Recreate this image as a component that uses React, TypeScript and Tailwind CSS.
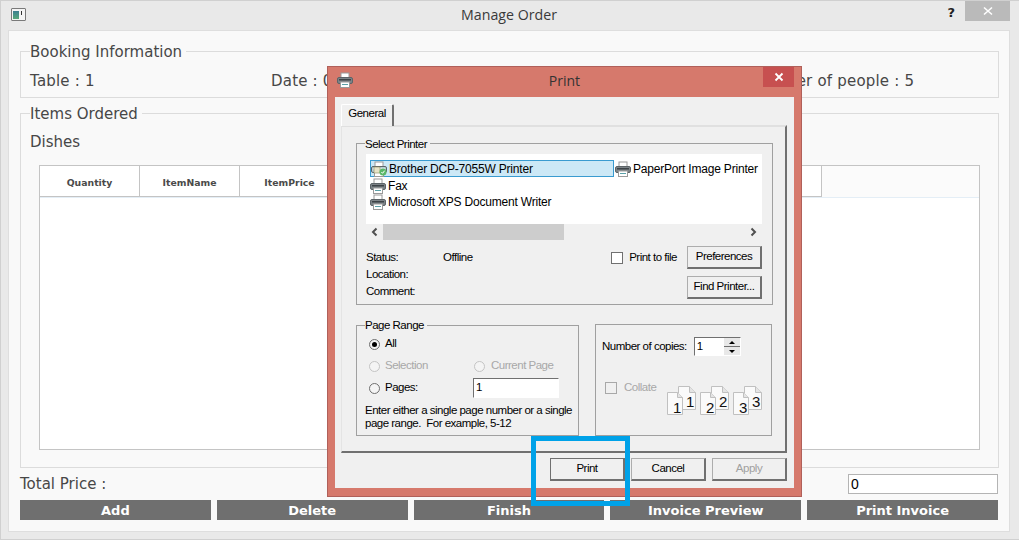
import React from "react";

const bottomButtons = ["Add", "Delete", "Finish", "Invoice Preview", "Print Invoice"];
const visibleColumns = ["Quantity", "ItemName", "ItemPrice", "", "", "", ""];

const PrinterIcon = ({ badge = false }: { badge?: boolean }) => (
  <svg width="16" height="16" viewBox="0 0 16 16" className="shrink-0">
    <rect x="4" y="1" width="8" height="5" fill="#fff" stroke="#9a9a9a" />
    <rect x="0.5" y="5.5" width="15" height="6" rx="1.5" fill={badge ? "#b9cfd6" : "#7d8488"} stroke="#5d6468" />
    <rect x="2" y="7" width="12" height="1.5" fill={badge ? "#dfeaee" : "#3d4347"} />
    <rect x="3.5" y="10" width="9" height="5.5" fill="#fff" stroke="#9a9a9a" />
    {badge ? (
      <>
        <rect x="3" y="6" width="6" height="6" fill="#e8e4c8" stroke="#8a8a60" strokeWidth="0.6" />
        <circle cx="12" cy="11" r="3.5" fill="#58b868" />
        <path d="M10.4 11l1.2 1.3 2-2.6" fill="none" stroke="#fff" strokeWidth="1" />
      </>
    ) : (
      <rect x="5" y="12" width="6" height="1" fill="#5aa0a8" />
    )}
  </svg>
);

const WinButton = ({ label, className = "" }: { label: string; className?: string }) => (
  <div
    className={`flex items-center justify-center h-[23px] bg-[#f0f0f0] border border-[#adadad] border-r-2 border-b-2 border-r-[#707070] border-b-[#707070] ${className}`}
  >
    {label}
  </div>
);

const Radio = ({ checked = false, disabled = false }: { checked?: boolean; disabled?: boolean }) => (
  <span
    className={`flex items-center justify-center w-[11px] h-[11px] rounded-full bg-[#f4f4f4] border shrink-0 ${
      disabled ? "border-[#c4c4c4]" : "border-[#6f6f6f]"
    }`}
  >
    {checked && <span className="w-[5px] h-[5px] rounded-full bg-black" />}
  </span>
);

const Check = ({ disabled = false }: { disabled?: boolean }) => (
  <span
    className={`block w-[12px] h-[12px] shrink-0 border ${
      disabled ? "bg-[#f0f0f0] border-[#a8a8a8]" : "bg-white border-[#707070]"
    }`}
  />
);

const PageIcon = ({ n }: { n: number }) => (
  <svg width="32" height="30" viewBox="0 0 32 30" className="shrink-0">
    <path d="M12.5 0.5h11l6 6v17h-17z" fill="#fafafa" stroke="#c0c0c0" />
    <path d="M23.5 0.5v6h6" fill="#e4e4e4" stroke="#c0c0c0" />
    <text x="24" y="21" fontSize="15" textAnchor="middle" fill="#111" fontFamily="Liberation Sans, sans-serif">{n}</text>
    <path d="M1.5 6.5h10l5 5v17h-15z" fill="#fafafa" stroke="#c0c0c0" />
    <path d="M11.5 6.5v5h5" fill="#e4e4e4" stroke="#c0c0c0" />
    <text x="11" y="27" fontSize="15" textAnchor="middle" fill="#111" fontFamily="Liberation Sans, sans-serif">{n}</text>
  </svg>
);

const PrintDialog = () => (
  <div className="absolute left-[326px] top-[65px] w-[475px] h-[431px] flex flex-col bg-[#d6796c] border border-[#b0605a] font-['Liberation_Sans',sans-serif] text-[11.5px] leading-none text-black tracking-[-0.5px]">
    {/* Title bar */}
    <div className="relative flex items-center justify-center h-[30px] shrink-0">
      <div className="absolute left-[9px] top-[5px]">
        <PrinterIcon />
      </div>
      <span className="font-['Open_Sans',sans-serif] text-[14px] text-[#333333] tracking-normal mb-[2px]">Print</span>
      <div className="absolute right-[7px] top-0 flex items-center justify-center w-[31px] h-[20px] bg-[#c75050]">
        <svg width="10" height="10" viewBox="0 0 10 10">
          <path d="M1.5 1.5l7 7M8.5 1.5l-7 7" stroke="#fff" strokeWidth="1.8" />
        </svg>
      </div>
    </div>

    <div className="flex-1 mx-[7px] mb-[8px] bg-[#f0f0f0] px-[6px] pt-[7px] flex flex-col">
      {/* Tab */}
      <div className="flex h-[21px] shrink-0">
        <div className="w-[53px] h-[22px] pb-[3px] z-10 flex items-center justify-center bg-[#f0f0f0] border-l border-t border-white border-r-2 border-r-[#707070] rounded-t-[2px]">
          General
        </div>
      </div>

      {/* Tab panel */}
      <div className="w-[446px] h-[328px] shrink-0 border border-t-2 border-[#e4e4e4] border-t-[#e0e0e0] border-r-2 border-r-[#707070] border-b-2 border-b-[#707070] px-[14px] pt-[9px] flex flex-col">
        <fieldset className="w-[417px] h-[169px] shrink-0 border border-[#a0a0a0] px-[9px] m-0 min-w-0">
          <legend className="ml-[-1px] pr-[3px] pt-[1px] leading-[14px]">Select Printer</legend>
          <div className="h-[70px] w-[396px] bg-white pt-[6px] pl-[4px] mt-[3px] text-[12px] tracking-[-0.2px]">
            <div className="flex">
              <div className="w-[244px] h-[17px] flex items-center gap-[2px] bg-[#cce8f6] border border-[#3a9bd0] pl-0">
                <PrinterIcon badge />
                <span>Brother DCP-7055W Printer</span>
              </div>
              <div className="h-[17px] flex items-center gap-[2px] ml-[1px]">
                <PrinterIcon />
                <span>PaperPort Image Printer</span>
              </div>
            </div>
            <div className="h-[17px] flex items-center gap-[2px]">
              <PrinterIcon />
              <span>Fax</span>
            </div>
            <div className="h-[16px] flex items-center gap-[2px]">
              <PrinterIcon />
              <span>Microsoft XPS Document Writer</span>
            </div>
          </div>

          {/* Scrollbar */}
          <div className="h-[16px] w-[396px] flex items-center bg-[#f0f0f0]">
            <svg width="17" height="16" viewBox="0 0 17 16" className="shrink-0">
              <path d="M10.5 4.5L7 8l3.5 3.5" fill="none" stroke="#505050" strokeWidth="2" />
            </svg>
            <div className="h-[16px] w-[181px] bg-[#cdcdcd]" />
            <div className="flex-1" />
            <svg width="17" height="16" viewBox="0 0 17 16" className="shrink-0">
              <path d="M6.5 4.5L10 8l-3.5 3.5" fill="none" stroke="#505050" strokeWidth="2" />
            </svg>
          </div>

          {/* Status */}
          <div className="flex w-[396px] mt-[6px]">
            <div className="w-[77px] flex flex-col gap-[4px] pt-[6px]">
              <span className="h-[13px]">Status:</span>
              <span className="h-[13px]">Location:</span>
              <span className="h-[13px]">Comment:</span>
            </div>
            <div className="flex-1 pt-[6px]">Offline</div>
            <div className="flex flex-col items-end gap-[7px]">
              <div className="flex items-center">
                <Check />
                <span className="ml-[6px] mr-[10px]">Print to file</span>
                <WinButton label="Preferences" className="w-[75px]" />
              </div>
              <WinButton label="Find Printer..." className="w-[75px]" />
            </div>
          </div>
        </fieldset>

        <div className="flex mt-[13px]">
          <fieldset className="w-[223px] h-[118px] shrink-0 border border-[#a0a0a0] px-[8px] m-0 min-w-0">
            <legend className="pr-[3px] h-[14px] leading-[14px]">Page Range</legend>
            <div className="flex items-center gap-[5px] h-[14px] ml-[4px] mt-[5px]">
              <Radio checked />
              <span>All</span>
            </div>
            <div className="flex items-center h-[14px] ml-[4px] mt-[8px] text-[#a8a8a8]">
              <div className="flex items-center gap-[5px] w-[105px]">
                <Radio disabled />
                <span>Selection</span>
              </div>
              <Radio disabled />
              <span className="ml-[6px]">Current Page</span>
            </div>
            <div className="flex items-center h-[20px] ml-[4px] mt-[5px]">
              <div className="flex items-center gap-[5px] w-[104px]">
                <Radio />
                <span>Pages:</span>
              </div>
              <div className="w-[86px] h-[20px] bg-white border border-[#707070] border-r-white border-b-white flex items-center pl-[2px]">
                1
              </div>
            </div>
            <p className="mt-[6px] leading-[13px] whitespace-pre">
              {"Enter either a single page number or a single\npage range.  For example, 5-12"}
            </p>
          </fieldset>

          <div className="w-[177px] h-[112px] shrink-0 ml-[16px] mt-[6px] border border-[#a0a0a0] pl-[6px] pt-[12px]">
            <div className="flex items-center h-[19px]">
              <span>Number of copies:</span>
              <div className="ml-[7px] w-[47px] h-[19px] flex bg-white border border-[#707070] border-r-white border-b-white">
                <span className="flex-1 pl-[2px] pt-[3px]">1</span>
                <div className="w-[16px] flex flex-col bg-[#e8e8e8]">
                  <div className="flex-1 flex items-center justify-center border-b border-[#707070]">
                    <span className="w-0 h-0 border-x-[3px] border-x-transparent border-b-[3px] border-b-black" />
                  </div>
                  <div className="flex-1 flex items-center justify-center">
                    <span className="w-0 h-0 border-x-[3px] border-x-transparent border-t-[3px] border-t-black" />
                  </div>
                </div>
              </div>
            </div>
            <div className="flex items-start mt-[20px] ml-[3px] h-[40px]">
              <div className="flex items-center mt-[6px] w-[61px] text-[#a8a8a8]">
                <Check disabled />
                <span className="ml-[7px]">Collate</span>
              </div>
              <div className="flex gap-[1px] mt-[10px]">
                <PageIcon n={1} />
                <PageIcon n={2} />
                <PageIcon n={3} />
              </div>
            </div>
          </div>
        </div>
      </div>

      {/* Dialog buttons */}
      <div className="flex justify-end gap-[6px] mt-[5px] w-[446px]">
        <WinButton label="Print" className="w-[75px] border-black/70 border-t-[#707070] border-l-[#707070]" />
        <WinButton label="Cancel" className="w-[75px]" />
        <WinButton label="Apply" className="w-[75px] text-[#a0a0a0]" />
      </div>
    </div>
  </div>
);

export default function App() {
  return (
    <div className="relative w-[1019px] h-[540px] overflow-hidden flex flex-col bg-[#e9e9e9] border-t border-l border-b border-[#d0d0d0] pl-[1px] pr-[1px] font-['DejaVu_Sans',sans-serif] text-[#474747]">
      {/* Window title bar */}
      <div className="relative h-[29px] shrink-0 flex items-center justify-center">
        <div className="absolute left-[9px] top-[7px] w-[15px] h-[13px] bg-[#f4f4f4] border border-[#7a7a7a] rounded-[1px] flex items-center pl-[1px] gap-[2px]">
          <span className="w-[6px] h-[8px] bg-gradient-to-b from-[#3d7f8f] to-[#58a878]" />
          <span className="w-[1px] h-[4px] bg-[#333333] mb-[3px]" />
        </div>
        <span className="font-['Open_Sans',sans-serif] text-[14.2px] text-[#3a3a3a] mb-[2px] mr-[2px]">Manage Order</span>
        <span className="absolute right-[63px] top-[3px] text-[13px] font-bold text-[#222] leading-none mt-[2px]">?</span>
        <div className="absolute right-[8px] top-0 w-[45px] h-[20px] bg-[#bababa] flex items-center justify-center">
          <svg width="10" height="10" viewBox="0 0 10 10">
            <path d="M1 1.5l8 7M9 1.5l-8 7" stroke="#fff" strokeWidth="1.6" />
          </svg>
        </div>
      </div>

      {/* Main panel */}
      <div className="w-[1002px] h-[502px] ml-[6px] shrink-0 bg-[#f9f9f9] border border-[#dedede] px-[11px] pt-[8px] flex flex-col">
        <fieldset className="w-[979px] h-[59px] shrink-0 border border-[#dcdcdc] m-0 px-[9px] min-w-0">
          <legend className="pr-[4px] pt-[2px] text-[15px] leading-[22px]">Booking Information</legend>
          <div className="flex items-center h-[22px] mt-[7px] text-[15px] tracking-[0.2px] whitespace-nowrap">
            <span className="w-[241px]">Table : 1</span>
            <span className="w-[480px]">Date : 0</span>
            <span>Number of people : 5</span>
          </div>
        </fieldset>

        <fieldset className="w-[979px] h-[367px] mt-[3px] shrink-0 border border-[#dcdcdc] m-0 px-[9px] min-w-0">
          <legend className="pr-[4px] pt-[2px] text-[15px] leading-[22px]">Items Ordered</legend>
          <div className="h-[22px] mt-[6px] text-[15px] leading-[22px]">Dishes</div>
          <div className="w-[941px] h-[285px] mt-[12px] ml-[9px] bg-white border border-[#c4c4c4]">
            <div className="flex h-[32px] bg-[#fbfbfb] border-b border-[#e4eef6]">
              {visibleColumns.map((col, i) => (
                <div
                  key={i}
                  className="w-[100px] shrink-0 flex items-center justify-center pt-[3px] bg-white border-r border-b border-[#c4c4c4] text-[9.3px] font-bold text-[#4a4a4a]"
                >
                  {col}
                </div>
              ))}
              <div className="w-[82px] shrink-0 bg-white border-r border-b border-[#c4c4c4]" />
            </div>
          </div>
        </fieldset>

        {/* Total */}
        <div className="flex items-center justify-between h-[20px] mt-[6px] w-[978px] text-[15px]">
          <span className="pt-[1px]">Total Price :</span>
          <div className="w-[150px] h-[20px] bg-white border border-[#b4b4b4] flex items-center pl-[2px] font-['Liberation_Sans',sans-serif] text-[14px] text-black">
            0
          </div>
        </div>

        {/* Action buttons */}
        <div className="flex gap-[6px] mt-[6px] w-[978px]">
          {bottomButtons.map((label) => (
            <div
              key={label}
              className="flex-1 h-[20px] pt-[1px] bg-[#6f6f6f] flex items-center justify-center text-[13px] font-bold text-white"
            >
              {label}
            </div>
          ))}
        </div>
      </div>

      <PrintDialog />

      {/* Highlight around the Print button */}
      <div className="absolute left-[530px] top-[435px] w-[99px] h-[70px] border-[5px] border-[#00a2e8]" />
    </div>
  );
}
